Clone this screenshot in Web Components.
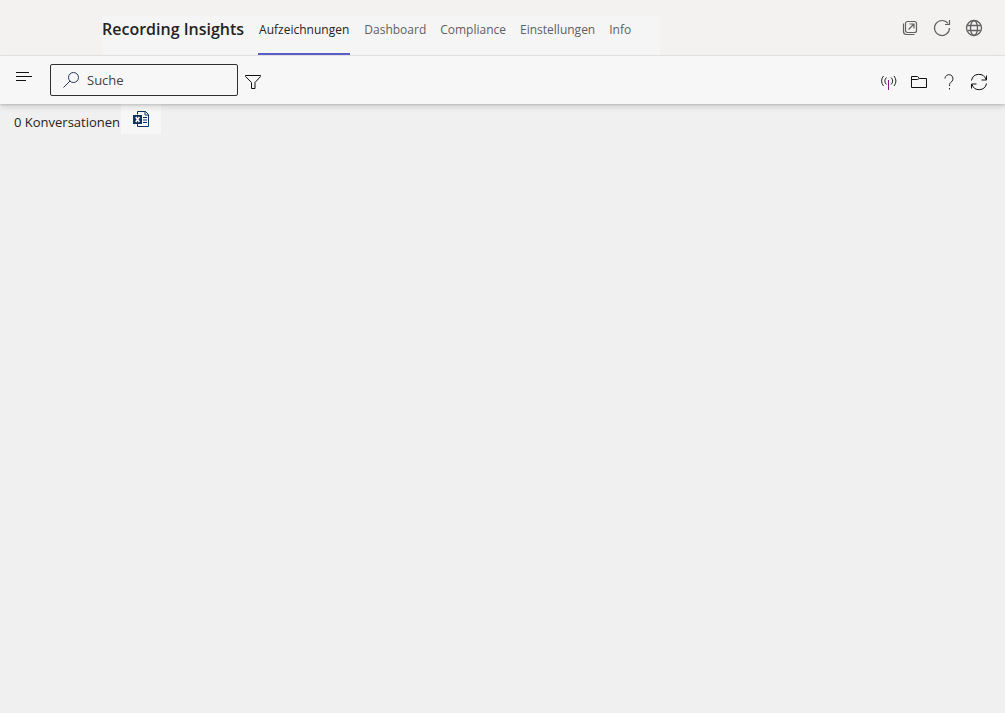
<!DOCTYPE html>
<html lang="de">
<head>
<meta charset="utf-8">
<meta name="viewport" content="width=device-width, initial-scale=1">
<title>Recording Insights</title>
<style>
  html, body { height: 100%; }
  body { margin: 0; background: #f0f0f0; color: #242424; font: 13px/20px "Open Sans", "Noto Sans", sans-serif; }
</style>
</head>
<body>
<insights-app></insights-app>
<script>
const ICONS = {
  popout: ['0 0 16 16', '<g stroke-width="1.2"><rect x="3.5" y="1.5" width="11" height="11" rx="2"/><path d="M1.5 3.500v8a3 3 0 0 0 3 3h8M6.500 9.500l5.500-5.500M7.500 4h4.500v4.500"/></g>'],
  reload: ['0 0 18 18', '<path stroke-width="1.2" d="M16.5 9A7.5 7.5 0 1 1 15 4.5M16.5 1v4.5H12"/>'],
  globe: ['0 0 18 18', '<g stroke-width="1.3"><circle cx="9" cy="9" r="7.5"/><ellipse cx="9" cy="9" rx="3.5" ry="7.5"/><path d="M2.5 6.5h13M2.5 11.5h13"/></g>'],
  menu: ['0 0 16 12', '<path d="M0 1.5h13M0 5.5h16M0 9.5h10"/>'],
  search: ['0 0 16 16', '<circle cx="10.5" cy="5.5" r="5"/><path d="M7 9 .5 15.5"/>'],
  filter: ['0 0 16 16', '<path d="M.5 1.5h15v1L10 8.500v6H6.500v-6L.5 2.500z"/>'],
  live: ['0 0 16 16', '<path stroke="#8a1a8a" d="M7.500 6V16"/><path d="M5.500 3.500a4.500 4.500 0 0 0 0 7M10 3.500a4.500 4.500 0 0 1 0 7M2.500 2a7.500 7.500 0 0 0 0 10M13 2a7.500 7.500 0 0 1 0 10" stroke-width=".9"/>'],
  folder: ['0 0 16 14', '<path d="M.5 12.500V1.500h6l2 2h7v9zM.5 4.500h6l2-1"/>'],
  help: ['0 0 16 16', '<path d="M4 4.500a4 4 0 1 1 6.800 3C9 9 8.500 9.500 8.500 12M8.500 14v1.500" stroke-width=".9"/>'],
  sync: ['0 0 18 18', '<path d="M1.500 7.500a7.500 7.500 0 0 1 14.500-1M16.500 2.500v4.500h-5M16.500 10.500a7.500 7.500 0 0 1-14.500 1M1.500 15.500v-4.500h5"/>'],
  excel: ['0 0 16 16', '<path d="M4.500 3.500v-3h8l3 3v12h-11v-3M12 .5V4h3.500M10 6.500h4M10 9h4M10 11.500h4"/><path d="M0 4h9v9H0z" fill="currentColor" stroke="none"/><path d="m2.800 6 3.600 5M6.400 6l-3.600 5" stroke="#fff" stroke-width="1.500"/>']
};

function define(name, markup, setup) {
  const template = document.createElement('template');
  template.innerHTML = markup;
  customElements.define(name, class extends HTMLElement {
    constructor() {
      super();
      this.attachShadow({ mode: 'open' }).append(template.content.cloneNode(true));
    }
    connectedCallback() { if (setup) setup(this, this.shadowRoot); }
  });
}

define('line-icon', `
  <style>
    :host { display: block; }
    svg { display: block; fill: none; stroke: currentColor; stroke-width: 1; }
  </style>
  <svg aria-hidden="true"></svg>`, (host, root) => {
  const [box, shapes] = ICONS[host.getAttribute('name')];
  const svg = root.querySelector('svg');
  const [, , width, height] = box.split(' ');
  svg.setAttribute('viewBox', box);
  svg.setAttribute('width', width);
  svg.setAttribute('height', height);
  svg.innerHTML = shapes;
});

define('icon-button', `
  <style>
    :host { display: block; width: 32px; height: 32px; }
    button { display: grid; place-items: center; width: 100%; height: 100%; margin: 0; padding: 0; border: 0; background: none; color: inherit; cursor: pointer; }
  </style>
  <button type="button"><slot></slot></button>`, (host, root) => {
  root.querySelector('button').setAttribute('aria-label', host.getAttribute('label'));
});

define('nav-tab', `
  <style>
    :host { display: flex; color: #616161; font-size: 12px; }
    a { box-sizing: border-box; padding: 4px 0 0; border-bottom: 2px solid transparent; color: inherit; text-align: center; text-decoration: none; white-space: nowrap; }
    :host([selected]) { color: #242424; font-weight: 500; }
    :host([selected]) a { padding: 4px 1px 0; border-color: #5b5fc7; }
  </style>
  <a href="#"><slot></slot></a>`, (host, root) => {
  if (host.hasAttribute('selected')) root.querySelector('a').setAttribute('aria-current', 'page');
});

define('app-header', `
  <style>
    :host { display: flex; justify-content: space-between; height: 55px; padding-left: 102px; background: #f3f2f1; border-bottom: 1px solid #e6e6e6; }
    .main { display: flex; gap: 14px; margin-top: 16px; padding-right: 29px; background: #f5f5f5; }
    h1 { margin: 0; padding-top: 2px; font-size: 16px; line-height: 22px; font-weight: 600; white-space: nowrap; }
    nav { display: flex; gap: 14px; }
    .actions { display: flex; padding: 12px 15px 0 0; color: #616161; }
  </style>
  <div class="main">
    <h1>Recording Insights</h1>
    <nav>
      <nav-tab selected>Aufzeichnungen</nav-tab>
      <nav-tab>Dashboard</nav-tab>
      <nav-tab>Compliance</nav-tab>
      <nav-tab>Einstellungen</nav-tab>
      <nav-tab>Info</nav-tab>
    </nav>
  </div>
  <div class="actions">
    <icon-button label="In neuem Fenster öffnen"><line-icon name="popout"></line-icon></icon-button>
    <icon-button label="Neu laden"><line-icon name="reload"></line-icon></icon-button>
    <icon-button label="Im Web öffnen"><line-icon name="globe"></line-icon></icon-button>
  </div>`);

define('search-field', `
  <style>
    :host { display: block; width: 188px; }
    label { display: flex; align-items: center; gap: 8px; box-sizing: border-box; height: 32px; padding: 0 12px; border: 1px solid #323130; border-radius: 2px; color: #24385f; }
    input { flex: 1; min-width: 0; margin: 0; padding: 0; border: 0; outline: 0; background: none; color: #424242; font: inherit; }
    input::placeholder { color: #424242; opacity: 1; }
  </style>
  <label><line-icon name="search"></line-icon><input type="text" placeholder="Suche" aria-label="Suche"></label>`);

define('tool-bar', `
  <style>
    :host { position: relative; display: flex; align-items: center; justify-content: space-between; height: 48px; padding: 0 11px 0 8px; background: #f7f7f7; color: #111; box-shadow: 0 3px 6px rgba(0, 0, 0, .12), 0 1px 2px rgba(0, 0, 0, .14); }
    div { display: flex; align-items: center; }
    .menu { padding: 0 10px 6px 0; }
    .right { padding-top: 4px; }
    .right icon-button { width: 30px; }
    .filter { width: 30px; padding-top: 4px; }
  </style>
  <div>
    <icon-button class="menu" label="Menü"><line-icon name="menu"></line-icon></icon-button>
    <search-field></search-field>
    <icon-button class="filter" label="Filter"><line-icon name="filter"></line-icon></icon-button>
  </div>
  <div class="right">
    <icon-button label="Live"><line-icon name="live"></line-icon></icon-button>
    <icon-button label="Ordner"><line-icon name="folder"></line-icon></icon-button>
    <icon-button label="Hilfe"><line-icon name="help"></line-icon></icon-button>
    <icon-button label="Aktualisieren"><line-icon name="sync"></line-icon></icon-button>
  </div>`);

define('result-bar', `
  <style>
    :host { display: flex; gap: 1px; padding-left: 14px; }
    p { margin: 0; padding-top: 8px; color: #242424; }
    icon-button { width: 40px; height: 30px; background: #f7f7f7; color: #0f3360; }
  </style>
  <p>0 Konversationen</p>
  <icon-button label="Nach Excel exportieren"><line-icon name="excel"></line-icon></icon-button>`);

define('insights-app', `
  <style>:host { display: block; min-height: 100%; }</style>
  <app-header></app-header>
  <tool-bar></tool-bar>
  <main><result-bar></result-bar></main>`);
</script>
</body>
</html>
